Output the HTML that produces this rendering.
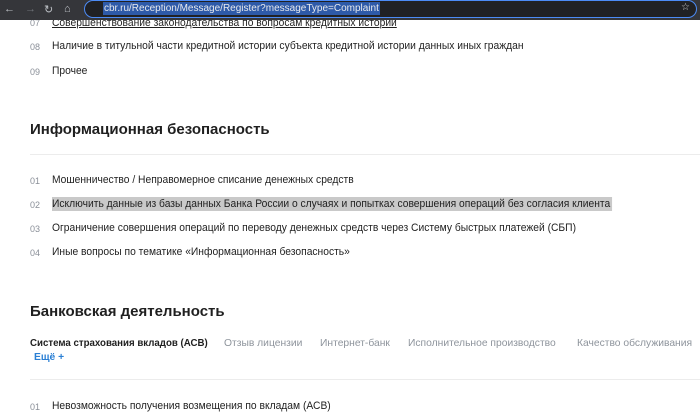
<!DOCTYPE html>
<html><head><meta charset="utf-8"><style>
body{margin:0;width:700px;height:404px;overflow:hidden;background:#fff;font-family:"Liberation Sans",sans-serif;position:relative;color:#1f1f1f}
.bar{position:absolute;left:0;top:0;width:700px;height:20px;background:#35363a}
.url{position:absolute;left:84px;top:0px;width:611px;height:16px;border:1.5px solid #4c8bf5;border-radius:10px;background:#202124}
.url span{position:absolute;left:18px;top:1px;font-size:10px;color:#e8eaed;background:#2e5aa8;padding:0 1px;line-height:13px}
.ic{position:absolute;top:3px;color:#bdc1c6;font-size:11px}
.a{position:absolute;font-size:11px;white-space:nowrap;line-height:14px;transform:scaleX(0.935);transform-origin:0 0}
.n{position:absolute;left:30px;font-size:9px;color:#8a8f98;line-height:14px}
h2{position:absolute;margin:0;font-size:15px;font-weight:bold;color:#1f1f1f;left:30px;white-space:nowrap}
.hr{position:absolute;left:30px;width:670px;height:1px;background:#ececec}
.t{position:absolute;top:338px;font-size:10.3px;color:#8e949c;white-space:nowrap}
</style></head><body>
<div class="a" style="left:52px;top:16px;text-decoration:underline">Совершенствование законодательства по вопросам кредитных историй</div>
<div class="n" style="top:16px">07</div>
<div class="bar">
<div class="ic" style="left:4px">←</div><div class="ic" style="left:25px;color:#6f7378">→</div><div class="ic" style="left:44px">↻</div><div class="ic" style="left:64px">⌂</div>
<div class="url"><span>cbr.ru/Reception/Message/Register?messageType=Complaint</span><div style="position:absolute;right:6px;top:1px;color:#ccc;font-size:10px">☆</div></div>
</div>
<div class="n" style="top:40px">08</div><div class="a" style="left:52px;top:39px">Наличие в титульной части кредитной истории субъекта кредитной истории данных иных граждан</div>
<div class="n" style="top:65px">09</div><div class="a" style="left:52px;top:64px">Прочее</div>
<h2 style="top:121px">Информационная безопасность</h2>
<div class="hr" style="top:154px"></div>
<div class="n" style="top:174px">01</div><div class="a" style="left:52px;top:173px">Мошенничество / Неправомерное списание денежных средств</div>
<div class="n" style="top:198px">02</div><div class="a" style="left:52px;top:197px;background:#c9c9c9;padding-right:2px">Исключить данные из базы данных Банка России о случаях и попытках совершения операций без согласия клиента</div>
<div class="n" style="top:222px">03</div><div class="a" style="left:52px;top:221px">Ограничение совершения операций по переводу денежных средств через Систему быстрых платежей (СБП)</div>
<div class="n" style="top:246px">04</div><div class="a" style="left:52px;top:245px">Иные вопросы по тематике «Информационная безопасность»</div>
<h2 style="top:303px">Банковская деятельность</h2>
<div class="t" style="left:30px;color:#1f1f1f;font-weight:bold;font-size:9.7px">Система страхования вкладов (АСВ)</div>
<div class="t" style="left:224px">Отзыв лицензии</div>
<div class="t" style="left:320px">Интернет-банк</div>
<div class="t" style="left:408px">Исполнительное производство</div>
<div class="t" style="left:577px">Качество обслуживания</div>
<div class="t" style="left:34px;top:352px;color:#2a7fd4;font-weight:bold">Ещё +</div>
<div class="hr" style="top:379px"></div>
<div class="n" style="top:400px">01</div><div class="a" style="left:52px;top:399px">Невозможность получения возмещения по вкладам (АСВ)</div>
</body></html>
